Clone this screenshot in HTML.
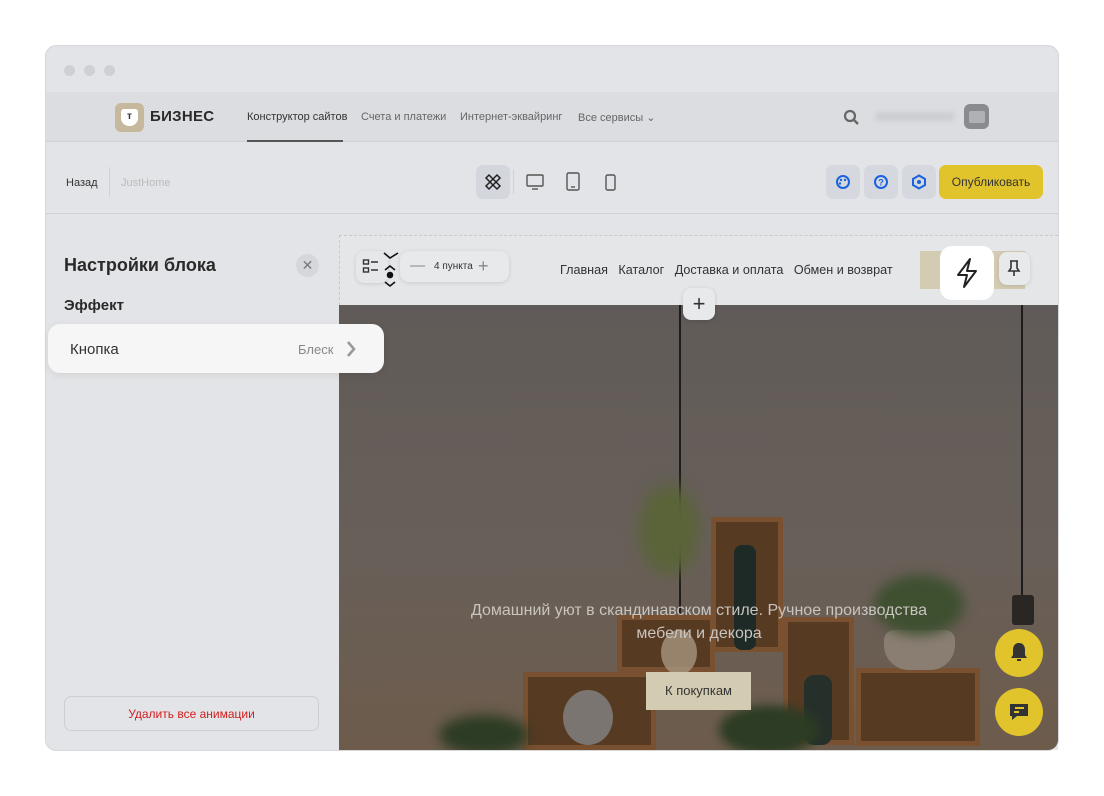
<!DOCTYPE html>
<html><head><meta charset="utf-8"><style>
*{box-sizing:border-box;margin:0;padding:0}
body{width:1104px;height:796px;background:#fff;font-family:"Liberation Sans",sans-serif;position:relative;overflow:hidden}
.abs{position:absolute}
.win{left:46px;top:46px;width:1012px;height:704px;border-radius:10px;overflow:hidden;background:#e3e4e7;box-shadow:0 0 0 1px #d6d7da}
.dot{width:11px;height:11px;border-radius:50%;background:#cfd0d4;top:19px}
.t{font-size:11px;color:#444;white-space:nowrap}
.ib{width:34px;height:34px;border-radius:7px;background:#d5d8de;top:165px}
.box{border:5px solid #7a5130;background:#573a22}
</style></head><body>
<div class="abs win">
 <div class="abs dot" style="left:18px"></div><div class="abs dot" style="left:38px"></div><div class="abs dot" style="left:58px"></div>
</div>
<div class="abs" style="left:46px;top:92px;width:1012px;height:50px;background:#dcdde1;border-bottom:1px solid #d0d1d5"></div>
<div class="abs" style="left:115px;top:103px;width:29px;height:29px;border-radius:6px;background:#c6b89c"></div>
<div class="abs" style="left:121px;top:109px;width:17px;height:17px;border-radius:3px 3px 8px 8px;background:#fff;color:#333;font-size:10px;font-weight:bold;text-align:center;line-height:16px">т</div>
<div class="abs" style="left:150px;top:108px;font-size:15px;font-weight:900;color:#2a2a2a;letter-spacing:.3px">БИЗНЕС</div>
<div class="abs t" style="left:247px;top:111px;color:#333">Конструктор сайтов</div>
<div class="abs" style="left:247px;top:140px;width:96px;height:2px;background:#555"></div>
<div class="abs t" style="left:361px;top:111px;color:#666">Счета и платежи</div>
<div class="abs t" style="left:460px;top:111px;color:#666">Интернет-эквайринг</div>
<div class="abs t" style="left:578px;top:111px;color:#666">Все сервисы ⌄</div>
<svg class="abs" style="left:843px;top:109px" width="16" height="16"><circle cx="7" cy="7" r="5" fill="none" stroke="#666" stroke-width="2.2"/><path d="M11 11l4 4" stroke="#666" stroke-width="2.4"/></svg>
<div class="abs" style="left:876px;top:112px;width:78px;height:9px;background:#ccced2;filter:blur(2px)"></div>
<div class="abs" style="left:964px;top:104px;width:25px;height:25px;border-radius:6px;background:#8a8b8e"></div>
<div class="abs" style="left:969px;top:111px;width:16px;height:12px;border-radius:2px;background:#b0b1b4"></div>
<div class="abs" style="left:46px;top:213px;width:1012px;height:1px;background:#d0d1d5"></div>
<div class="abs t" style="left:66px;top:177px;color:#333">Назад</div>
<div class="abs" style="left:109px;top:167px;width:1px;height:30px;background:#d0d1d5"></div>
<div class="abs t" style="left:121px;top:177px;color:#bbb">JustHome</div>
<div class="abs" style="left:476px;top:165px;width:34px;height:34px;border-radius:7px;background:#d3d6dc"></div>
<svg class="abs" style="left:484px;top:173px" width="18" height="18" fill="none" stroke="#222" stroke-width="1.5"><path d="M2 5l3-3 11 11-3 3z"/><path d="M16 5l-3-3L2 13l3 3z"/></svg>
<div class="abs" style="left:513px;top:170px;width:1px;height:24px;background:#d0d1d5"></div>
<svg class="abs" style="left:525px;top:172px" width="20" height="20" fill="none" stroke="#555" stroke-width="1.4"><rect x="2" y="3" width="16" height="11" rx="1"/><path d="M7 17h6"/></svg>
<svg class="abs" style="left:565px;top:172px" width="16" height="20" fill="none" stroke="#555" stroke-width="1.4"><rect x="2" y="1" width="12" height="17" rx="1.5"/><path d="M6 15h4"/></svg>
<svg class="abs" style="left:604px;top:174px" width="14" height="18" fill="none" stroke="#555" stroke-width="1.4"><rect x="2" y="1" width="9" height="15" rx="1.5"/></svg>
<div class="abs ib" style="left:826px"></div><div class="abs ib" style="left:864px"></div><div class="abs ib" style="left:902px"></div>
<svg class="abs" style="left:835px;top:174px" width="16" height="16"><circle cx="8" cy="8" r="6" fill="none" stroke="#1a62e0" stroke-width="2"/><circle cx="6" cy="6" r="1.2" fill="#1a62e0"/><circle cx="10" cy="6" r="1.2" fill="#1a62e0"/><circle cx="5" cy="9.5" r="1.2" fill="#1a62e0"/></svg>
<svg class="abs" style="left:873px;top:174px" width="16" height="16"><circle cx="8" cy="8" r="6" fill="none" stroke="#1a62e0" stroke-width="2"/><text x="8" y="11.5" font-size="9" font-weight="bold" fill="#1a62e0" text-anchor="middle" font-family="Liberation Sans">?</text></svg>
<svg class="abs" style="left:911px;top:174px" width="16" height="16"><path d="M8 1.5l6 3.5v6l-6 3.5-6-3.5v-6z" fill="none" stroke="#1a62e0" stroke-width="2"/><circle cx="8" cy="8" r="2" fill="#1a62e0"/></svg>
<div class="abs" style="left:939px;top:165px;width:104px;height:34px;border-radius:7px;background:#e1c32c;font-size:12px;color:#333;text-align:center;line-height:34px">Опубликовать</div>
<div class="abs" style="left:64px;top:255px;font-size:18px;font-weight:bold;color:#2a2a2a">Настройки блока</div>
<div class="abs" style="left:296px;top:254px;width:23px;height:23px;border-radius:50%;background:#d5d7dc;color:#777;text-align:center;line-height:22px;font-size:14px">✕</div>
<div class="abs" style="left:64px;top:297px;font-size:15px;font-weight:bold;color:#2a2a2a">Эффект</div>
<div class="abs" style="left:64px;top:696px;width:255px;height:35px;border:1px solid #ccced3;border-radius:7px;font-size:12px;color:#d02020;text-align:center;line-height:34px">Удалить все анимации</div>
<div class="abs" style="left:339px;top:214px;width:719px;height:536px;background:#e3e4e7"></div>
<div class="abs" style="left:339px;top:235px;width:719px;height:70px;background:#e5e6e8;border-top:1px dashed #c8c9cc"></div>
<div class="abs" style="left:339px;top:235px;width:1px;height:70px;border-left:1px dashed #c8c9cc"></div>
<div class="abs" style="left:339px;top:305px;width:719px;height:445px;border-bottom-right-radius:10px;overflow:hidden;background:linear-gradient(#605b58,#685f59 55%,#6d5c4c)">
 <div class="abs" style="left:340px;top:0;width:2px;height:320px;background:#1e1c1c"></div>
 <div class="abs" style="left:682px;top:0;width:2px;height:300px;background:#1e1c1c"></div>
 <div class="abs" style="left:673px;top:290px;width:22px;height:30px;background:#2a2624;border-radius:3px"></div>
 <div class="abs box" style="left:372px;top:212px;width:72px;height:135px"></div>
 <div class="abs box" style="left:278px;top:310px;width:98px;height:57px"></div>
 <div class="abs box" style="left:444px;top:312px;width:71px;height:128px"></div>
 <div class="abs box" style="left:184px;top:367px;width:133px;height:78px"></div>
 <div class="abs box" style="left:517px;top:363px;width:124px;height:78px"></div>
 <div class="abs" style="left:545px;top:325px;width:71px;height:40px;border-radius:10px 10px 25px 25px;background:#8a7e72"></div>
 <div class="abs" style="left:535px;top:270px;width:90px;height:60px;border-radius:50%;background:#3e5030;filter:blur(6px)"></div>
 <div class="abs" style="left:300px;top:180px;width:60px;height:90px;border-radius:50%;background:#5a6438;filter:blur(8px)"></div>
 <div class="abs" style="left:395px;top:240px;width:22px;height:105px;border-radius:8px;background:#1e2a26"></div>
 <div class="abs" style="left:465px;top:370px;width:28px;height:70px;border-radius:10px;background:#26302a"></div>
 <div class="abs" style="left:224px;top:385px;width:50px;height:55px;border-radius:50%;background:#7a7570"></div>
 <div class="abs" style="left:322px;top:325px;width:36px;height:45px;border-radius:50%;background:#a89680;opacity:.8"></div>
 <div class="abs" style="left:380px;top:400px;width:100px;height:50px;border-radius:50%;background:#2d3c24;filter:blur(5px)"></div>
 <div class="abs" style="left:100px;top:410px;width:90px;height:40px;border-radius:50%;background:#2d3c24;filter:blur(6px)"></div>
 <div class="abs" style="left:60px;top:294px;width:600px;text-align:center;font-size:16px;line-height:23px;color:#c8c4bf;white-space:nowrap">Домашний уют в скандинавском стиле. Ручное производства<br>мебели и декора</div>
 <div class="abs" style="left:307px;top:367px;width:105px;height:38px;background:#d3cbb2;font-size:13px;color:#333;text-align:center;line-height:38px">К покупкам</div>
</div>
<div class="abs" style="left:560px;top:263px;font-size:12.6px;color:#333;white-space:nowrap">Главная&nbsp;&nbsp;&nbsp;Каталог&nbsp;&nbsp;&nbsp;Доставка и оплата&nbsp;&nbsp;&nbsp;Обмен и возврат</div>
<div class="abs" style="left:920px;top:251px;width:105px;height:38px;background:#d3cbb2"></div>
<div class="abs" style="left:940px;top:246px;width:54px;height:54px;border-radius:12px;background:#fff"></div>
<svg class="abs" style="left:953px;top:257px" width="28" height="32" fill="none" stroke="#222" stroke-width="2" stroke-linejoin="round"><path d="M17 2L5 18h9l-3 12 12-16h-9z"/></svg>
<div class="abs" style="left:999px;top:252px;width:31px;height:33px;border-radius:8px;background:#e8e9eb;box-shadow:0 1px 4px rgba(0,0,0,.12)"></div>
<svg class="abs" style="left:1006px;top:259px" width="16" height="18" fill="none" stroke="#333" stroke-width="1.6"><path d="M4 2h8M5 2v7l-2 3h10l-2-3V2M8 12v5"/></svg>
<div class="abs" style="left:356px;top:251px;width:32px;height:32px;border-radius:8px;background:#e6e7e9;box-shadow:0 1px 4px rgba(0,0,0,.12)"></div>
<svg class="abs" style="left:362px;top:258px" width="18" height="18" fill="none" stroke="#333" stroke-width="1.4"><rect x="1.5" y="2" width="5" height="4"/><rect x="1.5" y="10" width="5" height="4"/><path d="M9 4h7M9 12h7"/></svg>
<svg class="abs" style="left:382px;top:250px" width="18" height="40" fill="none" stroke="#111" stroke-width="1.6"><path d="M2 3l6 5 8-5M3 20l5-4 5 4M3 32l5 4 5-4"/><circle cx="8" cy="25" r="2.5" fill="#111"/></svg>
<div class="abs" style="left:400px;top:251px;width:109px;height:31px;border-radius:9px;background:#e8e9eb;box-shadow:0 1px 4px rgba(0,0,0,.12)"></div>
<div class="abs" style="left:410px;top:260px;font-size:15px;color:#888;line-height:12px">—</div>
<div class="abs" style="left:434px;top:261px;font-size:10px;color:#333">4 пункта</div>
<div class="abs" style="left:478px;top:256px;font-size:18px;color:#888;line-height:20px">+</div>
<div class="abs" style="left:683px;top:288px;width:32px;height:32px;border-radius:8px;background:#e8e9eb;box-shadow:0 1px 4px rgba(0,0,0,.15);font-size:22px;text-align:center;line-height:31px;color:#333">+</div>
<div class="abs" style="left:48px;top:324px;width:336px;height:49px;border-radius:12px;background:#f6f6f6;box-shadow:0 2px 8px rgba(0,0,0,.08)"></div>
<div class="abs" style="left:70px;top:341px;font-size:15px;color:#333">Кнопка</div>
<div class="abs" style="left:298px;top:342px;font-size:13px;color:#888">Блеск</div>
<svg class="abs" style="left:344px;top:339px" width="14" height="20" fill="none" stroke="#999" stroke-width="2.6"><path d="M4 3l6 7-6 7"/></svg>
<div class="abs" style="left:995px;top:629px;width:48px;height:48px;border-radius:50%;background:#e1c32c"></div>
<svg class="abs" style="left:1008px;top:640px" width="22" height="24"><path d="M11 3c-4 0-6 3-6 7v5l-2 3h16l-2-3v-5c0-4-2-7-6-7z" fill="#333"/><rect x="9" y="19" width="4" height="2" fill="#333"/></svg>
<div class="abs" style="left:995px;top:688px;width:48px;height:48px;border-radius:50%;background:#e1c32c"></div>
<svg class="abs" style="left:1007px;top:700px" width="24" height="24"><path d="M3 4h18v12H10l-5 4v-4H3z" fill="#333"/><path d="M8 8h9M7 12h5" stroke="#e1c32c" stroke-width="2"/></svg>
</body></html>
